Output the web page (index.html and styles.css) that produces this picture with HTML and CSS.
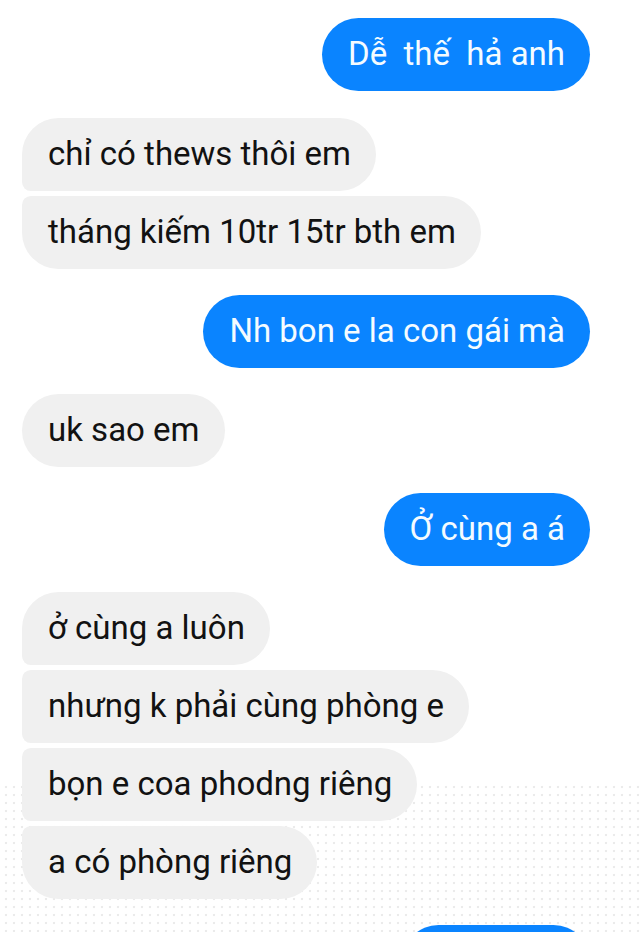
FILE: index.html
```html
<!DOCTYPE html>
<html lang="vi">
<head>
<meta charset="utf-8">
<title>Chat</title>
<link rel="stylesheet" href="styles.css">
</head>
<body>
<main class="chat">
  <div class="group group--out first">
    <div class="bubble out">Dễ  thế  hả anh</div>
  </div>
  <div class="group group--in">
    <div class="bubble in">chỉ có thews thôi em</div>
    <div class="bubble in">tháng kiếm 10tr 15tr bth em</div>
  </div>
  <div class="group group--out">
    <div class="bubble out">Nh bon e la con gái mà</div>
  </div>
  <div class="group group--in">
    <div class="bubble in">uk sao em</div>
  </div>
  <div class="group group--out">
    <div class="bubble out">Ở cùng a á</div>
  </div>
  <div class="group group--in">
    <div class="bubble in">ở cùng a luôn</div>
    <div class="bubble in">nhưng k phải cùng phòng e</div>
    <div class="bubble in">bọn e coa phodng riêng</div>
    <div class="bubble in">a có phòng riêng</div>
  </div>
  <div class="group group--out">
    <div class="bubble out cut"></div>
  </div>
</main>
</body>
</html>
```

FILE: styles.css
```css
html, body {
  margin: 0;
  padding: 0;
  height: 932px;
  overflow: hidden;
}

body {
  background:
    linear-gradient(#ffffff, #ffffff) 0 0 / 100% 783px no-repeat,
    radial-gradient(circle, #ebebeb 0.9px, rgba(255,255,255,0) 1.6px) 2px 783px / 8px 8px,
    #ffffff;
  font-family: Roboto, "Noto Sans", "Liberation Sans", sans-serif;
}

.chat {
  display: flex;
  flex-direction: column;
  gap: 26px;
  padding: 18px 50px 0 22px;
}

.group {
  display: flex;
  flex-direction: column;
  gap: 5px;
}

.group.first {
  margin-bottom: 1px;
}

.group--out {
  align-items: flex-end;
}

.group--in {
  align-items: flex-start;
}

.bubble {
  box-sizing: border-box;
  height: 73px;
  display: flex;
  align-items: center;
  padding: 0 25px 2px 26px;
  font-size: 33px;
  white-space: pre;
  border-radius: 37px;
}

.bubble.out {
  background: #0a84ff;
  color: #f4fbff;
}

.bubble.in {
  background: #f0f0f0;
  color: #121212;
}

.group--in .bubble:not(:last-child) {
  border-bottom-left-radius: 9px;
}

.group--in .bubble:not(:first-child) {
  border-top-left-radius: 9px;
}

.bubble.cut {
  width: 188px;
}
```
